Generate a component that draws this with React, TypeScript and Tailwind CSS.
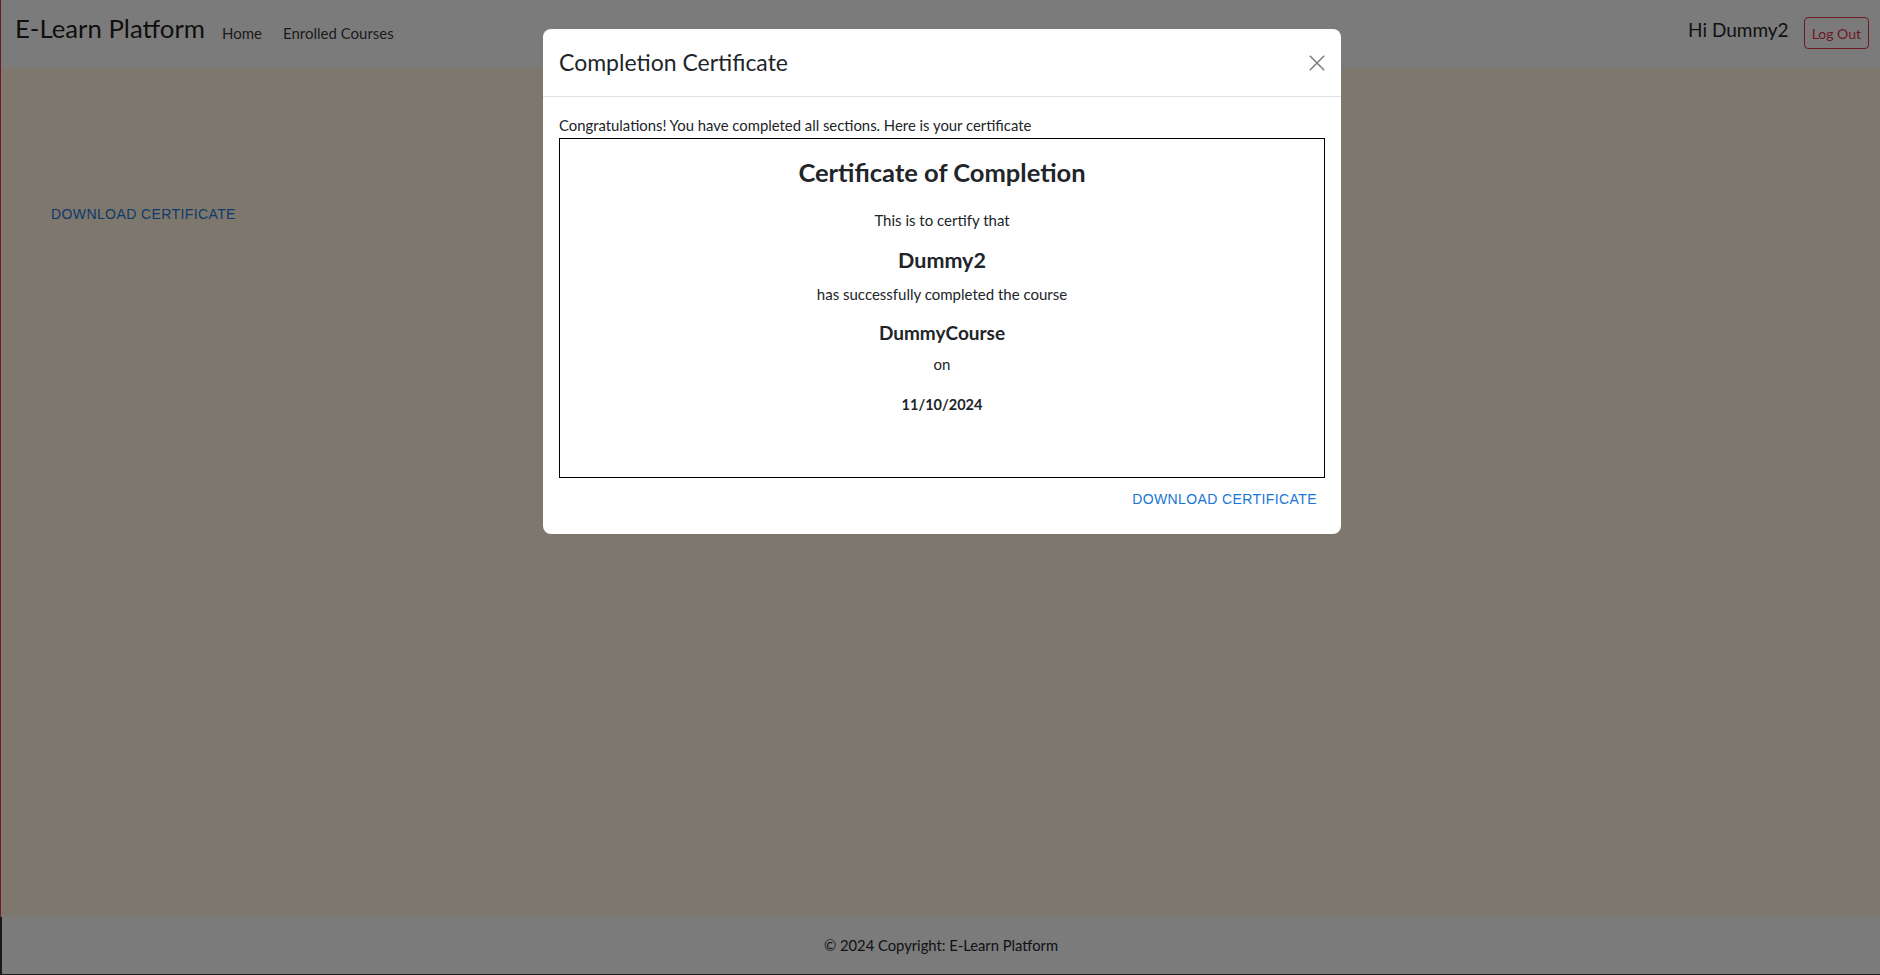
const Navbar = () => (
  <nav className="h-[68px] bg-[#f6f6f6] flex items-start pl-[14px] pr-[11px] border-l border-[#dc3545]">
    <a className="text-[25.75px] text-black/90 leading-none mt-[16px] mr-[17px]">E-Learn Platform</a>
    <a className="text-[15px] text-black/80 leading-none mt-[26px] mr-[21px]">Home</a>
    <a className="text-[15px] text-black/80 leading-none mt-[26px]">Enrolled Courses</a>
    <div className="ml-auto flex items-start">
      <span className="text-[19px] text-[#212529] leading-none mt-[20px] mr-[15px]">Hi Dummy2</span>
      <button className="mt-[17px] h-[32px] px-[7px] border border-[#dc3545] rounded text-[#dc3545] text-[14px] leading-none pt-[1px]">
        Log Out
      </button>
    </div>
  </nav>
);

const Certificate = () => (
  <div className="border border-black h-[340px] flex flex-col items-center text-[#212529] pt-[18px]">
    <h3 className="text-[25.5px] font-bold leading-[30px]">Certificate of Completion</h3>
    <p className="text-[15px] leading-[20px] mt-[23px]">This is to certify that</p>
    <h4 className="text-[21.5px] font-bold leading-[26px] mt-[16.5px]">Dummy2</h4>
    <p className="text-[15px] leading-[20px] mt-[11.5px]">has successfully completed the course</p>
    <h5 className="text-[19px] font-bold leading-[24px] mt-[17px]">DummyCourse</h5>
    <p className="text-[15px] leading-[20px] mt-[9px]">on</p>
    <h6 className="text-[14.5px] font-bold leading-[20px] mt-[20.5px]">11/10/2024</h6>
  </div>
);

const CloseIcon = () => (
  <svg width="16" height="16" viewBox="0 0 16 16" fill="none" stroke="#808080" strokeWidth="1.6">
    <path d="M0.8 0.8 L15.2 15.2 M15.2 0.8 L0.8 15.2" />
  </svg>
);

const Modal = () => (
  <div className="fixed inset-0 bg-black/50">
    <div className="absolute left-[543px] top-[29px] w-[798px] bg-white rounded-lg">
      <div className="h-[68px] flex items-center justify-between pl-4 pr-[16px] border-b border-[#dee2e6]">
        <h5 className="text-[23px] text-[#212529]">Completion Certificate</h5>
        <button className="p-0 mt-[1px]">
          <CloseIcon />
        </button>
      </div>
      <div className="p-4 pb-[16px]">
        <p className="text-[14.85px] leading-6 text-[#212529] mb-[1px]">
          Congratulations! You have completed all sections. Here is your certificate
        </p>
        <Certificate />
        <div className="flex justify-end mt-[3px]">
          <button className="px-2 py-[6px] font-['Liberation_Sans',Arial,sans-serif] text-[14px] tracking-[0.4px] leading-[1.75] text-[#1976d2] uppercase">
            Download Certificate
          </button>
        </div>
      </div>
    </div>
  </div>
);

export default function App() {
  return (
    <div className="relative h-[975px] flex flex-col font-['Lato',sans-serif] border-b border-[#333]">
      <Navbar />
      <main className="flex-1 bg-[#fdeedb] border-l border-[#dc3545] pt-[128px] pl-[42px]">
        <button className="px-2 py-[6px] font-['Liberation_Sans',Arial,sans-serif] text-[14px] tracking-[0.4px] leading-[1.75] text-[#1976d2] uppercase">
          Download Certificate
        </button>
      </main>
      <footer className="h-[57px] bg-[#f6f6f6] border-l-2 border-[#333] flex items-center justify-center text-[14.75px] text-[#212529]">
        © 2024 Copyright: E-Learn Platform
      </footer>
      <Modal />
    </div>
  );
}
